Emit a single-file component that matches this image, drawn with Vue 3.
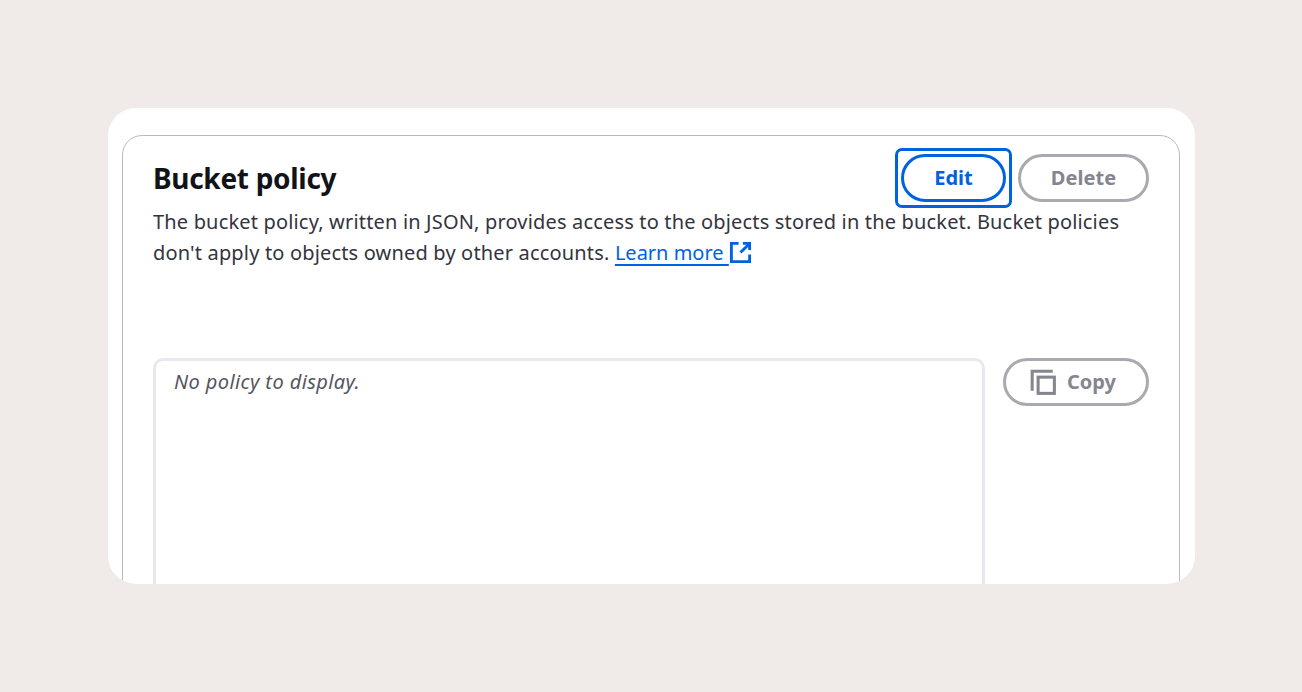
<template>
  <div class="page">
    <div class="frame">
      <section class="card">
        <div class="card-head">
          <div class="head-text">
            <h2 class="title">Bucket policy</h2>
          </div>
          <div class="actions">
            <span class="focus-ring">
              <button class="btn btn-edit">Edit</button>
            </span>
            <button class="btn btn-disabled btn-delete">Delete</button>
          </div>
        </div>
        <p class="desc">
          The bucket policy, written in JSON, provides access to the objects stored in the bucket. Bucket policies
          don't apply to objects owned by other accounts.
          <a class="learn" href="#">Learn more&nbsp;</a>
          <svg class="ext-icon" viewBox="0 0 24 24" fill="none" stroke="#0062df" stroke-width="3">
            <path d="M10 2.5H2.5v19h19V14" />
            <path d="M14.5 2.5h7v7" />
            <path d="M21.5 2.5L12 12" />
          </svg>
        </p>
        <div class="policy-row">
          <div class="policy-box">No policy to display.</div>
          <button class="btn btn-disabled btn-copy">
            <svg class="copy-icon" viewBox="0 0 24 24" fill="none" stroke="#85858e" stroke-width="2.8">
              <path d="M2 20V2h19" />
              <rect x="7.5" y="7.5" width="15" height="15" />
            </svg>
            Copy
          </button>
        </div>
      </section>
    </div>
  </div>
</template>

<script setup>
</script>

<style>
html, body {
  background: #f0ebe8;
}
</style>

<style scoped>
.page {
  height: 692px;
  box-sizing: border-box;
  padding: 108px 107px 108px 108px;
  background: #f0ebe8;
  font-family: "Noto Sans", "Open Sans", sans-serif;
}

.frame {
  height: 476px;
  box-sizing: border-box;
  padding: 27px 15px 0 14px;
  background: #fff;
  border-radius: 28px;
  overflow: hidden;
}

.card {
  box-sizing: border-box;
  height: 600px;
  padding: 0 30px;
  border: 1px solid #b9b9be;
  border-radius: 20px;
}

.card-head {
  display: flex;
  justify-content: space-between;
  align-items: flex-start;
  padding-top: 12px;
}

.title {
  margin: 10px 0 0;
  font-size: 28px;
  line-height: 40px;
  font-weight: 700;
  letter-spacing: -0.3px;
  color: #111318;
}

.actions {
  display: flex;
  align-items: center;
  gap: 6px;
  margin-bottom: -2px;
}

.focus-ring {
  display: block;
  padding: 3px;
  border: 3px solid #0062df;
  border-radius: 7px;
}

.btn {
  box-sizing: border-box;
  display: flex;
  align-items: center;
  justify-content: center;
  height: 48px;
  padding: 0 0 2px;
  background: #fff;
  border: 3px solid #a9a9b0;
  border-radius: 24px;
  font-family: inherit;
  font-size: 20px;
  font-weight: 700;
  letter-spacing: 0.05px;
  color: #85858e;
}

.btn-edit {
  width: 105px;
  border-color: #0062df;
  color: #0062df;
}

.btn-delete {
  width: 131px;
}

.desc {
  margin: 0;
  font-size: 20px;
  line-height: 31px;
  letter-spacing: 0.17px;
  color: #33343d;
}

.learn {
  color: #0062df;
  letter-spacing: 0;
  text-decoration: underline;
  text-decoration-thickness: 2px;
  text-underline-offset: 4px;
}

.ext-icon {
  width: 23px;
  height: 23px;
  vertical-align: -4px;
}

.policy-row {
  display: flex;
  align-items: flex-start;
  gap: 18px;
  margin-top: 90px;
}

.policy-box {
  flex: 1;
  box-sizing: border-box;
  height: 300px;
  padding: 7px 18px;
  border: 3px solid #e8e8ef;
  border-radius: 10px;
  font-size: 20px;
  line-height: 28px;
  font-style: italic;
  letter-spacing: 0.4px;
  color: #55565f;
}

.btn-copy {
  width: 146px;
  gap: 11px;
  padding-right: 6px;
}

.copy-icon {
  width: 26px;
  height: 26px;
  margin-top: 2px;
}
</style>
